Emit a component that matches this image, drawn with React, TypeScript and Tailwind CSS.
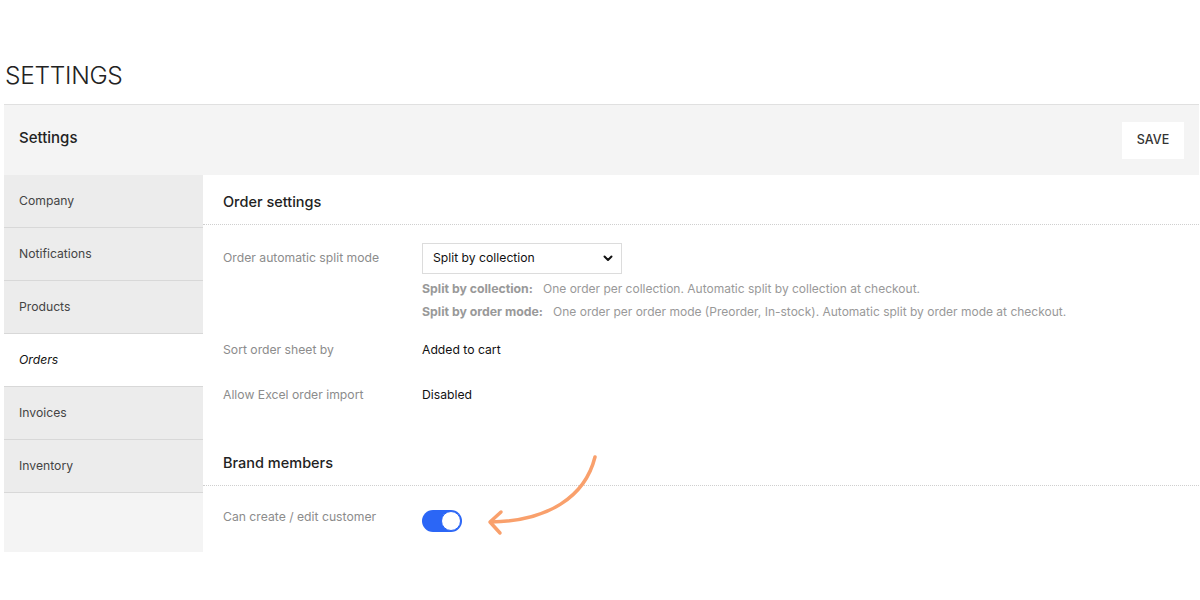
import React from "react"

const menu = ["Company", "Notifications", "Products", "Orders", "Invoices", "Inventory"]

function Toggle() {
  return (
    <div className="w-[40px] h-[22px] rounded-full bg-[#2b66f6] flex items-center justify-end pr-[1px]">
      <div className="w-[20px] h-[20px] rounded-full bg-white border border-[#2b66f6]" />
    </div>
  )
}

function Arrow() {
  return (
    <svg className="absolute left-0 top-0 pointer-events-none" width="1200" height="600" viewBox="0 0 1200 600" fill="none">
      <path
        d="M595 457 C 585 497, 548 521, 491 522"
        stroke="#f9a06c"
        strokeWidth="3.5"
        strokeLinecap="round"
      />
      <path
        d="M501 512 L490 522 L500 533"
        stroke="#f9a06c"
        strokeWidth="3.5"
        strokeLinecap="round"
        strokeLinejoin="round"
      />
    </svg>
  )
}

export default function App() {
  return (
    <div className="relative w-[1200px] h-[600px] bg-white text-[#222] overflow-hidden" style={{ fontFamily: "Inter, 'Liberation Sans', sans-serif" }}>
      <div className="pl-[4px] pr-[1px] pt-[58px]">
        <h1 className="text-[24.5px] font-light leading-[34px] tracking-[-0.3px] pl-[1px] text-[#222] mb-[12px]">SETTINGS</h1>

        <div className="border-t border-[#e0e0e0]">
          {/* Header */}
          <div className="h-[70px] bg-[#f4f4f4] flex items-center justify-between pl-[15px] pr-[15px] pb-[3px]">
            <span className="text-[15px] font-medium text-[#222]">Settings</span>
            <button className="h-[37px] w-[62px] bg-white text-[12.5px] font-medium text-[#333] mt-[3px]">SAVE</button>
          </div>

          <div className="flex">
            {/* Sidebar */}
            <div className="w-[199px] h-[377px] bg-[#f4f4f4]">
              {menu.map((item) => (
                <div
                  key={item}
                  className={`h-[53px] px-[15px] flex items-center text-[12.2px] border-b border-[#d8d8d8] ${
                    item === "Orders" ? "bg-white italic text-[#111]" : "bg-[#ececec] text-[#444]"
                  }`}
                >
                  {item}
                </div>
              ))}
            </div>

            {/* Main */}
            <div className="flex-1 bg-white">
              <div className="h-[50px] px-5 pt-[5px] flex items-center text-[14.5px] font-medium border-b border-dotted border-[#cfcfcf]">
                Order settings
              </div>

              <div className="pl-5 pt-[18px]">
                <div className="flex">
                  <div className="w-[199px] h-[31px] flex items-center text-[12.2px] text-[#8c8c8c]">Order automatic split mode</div>
                  <div>
                    <div className="w-[200px] h-[31px] border border-[#dcdcdc] flex items-center justify-between pl-[10px] pr-[8px] text-[12.2px] text-[#111]">
                      Split by collection
                      <svg width="10" height="7" viewBox="0 0 10 7" fill="none">
                        <path d="M1.5 1.5 L5 5 L8.5 1.5" stroke="#111" strokeWidth="2" strokeLinecap="round" strokeLinejoin="round" />
                      </svg>
                    </div>
                    <div className="mt-[3px] text-[12px] leading-[23px] text-[#999] whitespace-nowrap">
                      <div>
                        <span className="font-bold text-[12.3px]">Split by collection:</span>&nbsp;&nbsp; One order per collection. Automatic split by collection at checkout.
                      </div>
                      <div>
                        <span className="font-bold text-[12.3px]">Split by order mode:</span>&nbsp;&nbsp; One order per order mode (Preorder, In-stock). Automatic split by order mode at checkout.
                      </div>
                    </div>
                  </div>
                </div>

                <div className="mt-[5px] flex h-[45px] items-center text-[12.2px]">
                  <div className="w-[199px] text-[#8c8c8c]">Sort order sheet by</div>
                  <div className="text-[#111]">Added to cart</div>
                </div>
                <div className="flex h-[45px] items-center text-[12.2px]">
                  <div className="w-[199px] text-[#8c8c8c]">Allow Excel order import</div>
                  <div className="text-[#111]">Disabled</div>
                </div>
              </div>

              <div className="mt-[19px] h-[49px] px-5 pt-[4px] flex items-center text-[14.5px] font-medium border-b border-dotted border-[#cfcfcf]">
                Brand members
              </div>

              <div className="pl-5 pt-[21px] flex">
                <div className="w-[199px] text-[12.2px] leading-[20px] text-[#8c8c8c]">Can create / edit customer</div>
                <div className="mt-[3px]">
                  <Toggle />
                </div>
              </div>
            </div>
          </div>
        </div>
      </div>
      <Arrow />
    </div>
  )
}
